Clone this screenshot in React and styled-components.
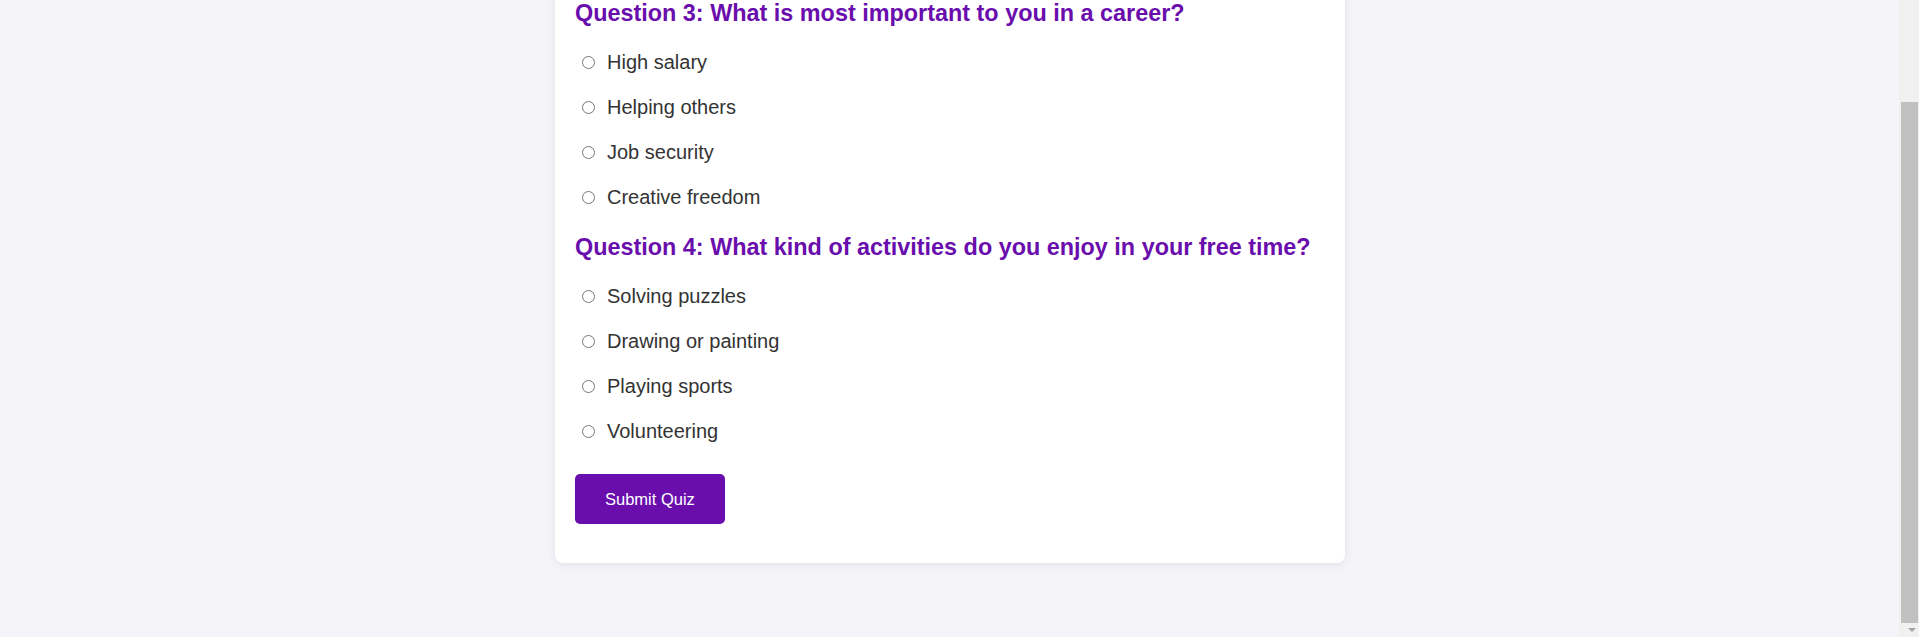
import React, { useLayoutEffect } from "react";
import styled, { createGlobalStyle } from "styled-components";

const GlobalStyle = createGlobalStyle`
  html, body {
    margin: 0;
    padding: 0;
    background: #f4f4f9;
    font-family: "Liberation Sans", Arial, sans-serif;
  }
`;

const Page = styled.main`
  padding: 84px 19px 74px 0;
`;

const Card = styled.div`
  max-width: 750px;
  margin: 0 auto;
  padding: 20px;
  background: #ffffff;
  border-radius: 8px;
  box-shadow: 0 2px 10px rgba(0, 0, 0, 0.08);
`;

const Form = styled.form`
  display: flex;
  flex-direction: column;
  align-items: flex-start;
`;

const QuestionBlock = styled.fieldset`
  border: 0;
  margin: 0;
  padding: 0;
  min-width: 0;
  align-self: stretch;
  & + & {
    margin-top: 14px;
  }
`;

const QuestionTitle = styled.legend`
  display: block;
  padding: 0;
  margin: 0 0 13px;
  color: #6a0dad;
  font-size: 23.4px;
  line-height: 27px;
  font-weight: 700;
  float: left;
  width: 100%;
`;

const OptionList = styled.div`
  clear: both;
  display: flex;
  flex-direction: column;
`;

const Option = styled.label`
  display: flex;
  align-items: center;
  padding: 11px 0;
  font-size: 20px;
  line-height: 23px;
  color: #333333;
  cursor: pointer;
`;

const Radio = styled.input.attrs({ type: "radio" })`
  width: 13px;
  height: 13px;
  margin: 0 12px 0 7px;
  flex: none;
`;

const SubmitButton = styled.button`
  margin: 20px 0 19px;
  padding: 15px 30px;
  border: 0;
  border-radius: 5px;
  background: #6a0dad;
  color: #ffffff;
  font-family: "Liberation Sans", Arial, sans-serif;
  font-size: 16.5px;
  line-height: 20px;
  cursor: pointer;
`;

/* Classic window scrollbar drawn over the right edge of the viewport */
const ScrollTrack = styled.div`
  position: fixed;
  top: 0;
  right: 0;
  bottom: 0;
  width: 20px;
  background: #f1f1f1;
  display: flex;
  flex-direction: column;
  align-items: flex-end;
`;

const ScrollThumb = styled.div`
  margin-top: 102px;
  width: 17px;
  height: 521px;
  margin-right: 1px;
  background: #c1c1c1;
`;

const ScrollArrow = styled.div`
  margin: 5px 3px 0 0;
  width: 0;
  height: 0;
  border-left: 4.5px solid transparent;
  border-right: 4.5px solid transparent;
  border-top: 4.5px solid #a3a3a3;
`;

const questions = [
  {
    id: "q3",
    title: "Question 3: What is most important to you in a career?",
    options: ["High salary", "Helping others", "Job security", "Creative freedom"],
  },
  {
    id: "q4",
    title: "Question 4: What kind of activities do you enjoy in your free time?",
    options: ["Solving puzzles", "Drawing or painting", "Playing sports", "Volunteering"],
  },
];

export default function App() {
  useLayoutEffect(() => {
    window.scrollTo(0, document.documentElement.scrollHeight);
  }, []);

  return (
    <>
      <GlobalStyle />
      <Page>
        <Card>
          <Form onSubmit={(e) => e.preventDefault()}>
            {questions.map((q) => (
              <QuestionBlock key={q.id}>
                <QuestionTitle>{q.title}</QuestionTitle>
                <OptionList>
                  {q.options.map((opt) => (
                    <Option key={opt}>
                      <Radio name={q.id} value={opt} />
                      {opt}
                    </Option>
                  ))}
                </OptionList>
              </QuestionBlock>
            ))}
            <SubmitButton type="submit">Submit Quiz</SubmitButton>
          </Form>
        </Card>
      </Page>
      <ScrollTrack aria-hidden="true">
        <ScrollThumb />
        <ScrollArrow />
      </ScrollTrack>
    </>
  );
}
